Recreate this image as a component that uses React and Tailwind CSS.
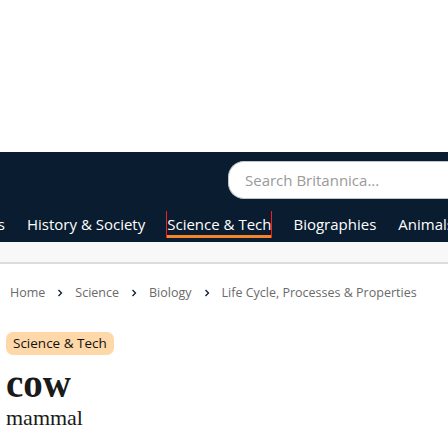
import React from 'react';

const navItems = ['History & Society', 'Science & Tech', 'Biographies', 'Animals & Nature', 'Geography & Travel'];
const crumbs = ['Home', 'Science', 'Biology', 'Life Cycle, Processes & Properties'];
const tabs = [
    { label: 'Table of Contents', w: 'w-[62px]' },
    { label: 'Ask', w: 'w-[58px]' },
    { label: 'Facts', w: 'w-[66px]' },
    { label: 'Related', w: 'w-[87px]' },
    { label: 'Cite', w: 'w-[36px]' },
];

const App = () => {
    return (
        <div className="w-[448px] h-[448px] overflow-hidden bg-white" style={{ fontFamily: '"Open Sans", "Noto Sans", sans-serif' }}>
            <div className="h-[152px]" />

            <header className="bg-[#0a1c30] h-[90px] flex flex-col">
                <div className="flex pt-[9px] pl-[228px]">
                    <div className="flex-1 h-[38px] bg-white rounded-l-[16px] border border-[#bfc4c9] border-r-0 flex items-center pl-[16px]">
                        <span className="text-[15px] text-[#9a9a9a] whitespace-nowrap">Search Britannica...</span>
                    </div>
                </div>
                <nav className="flex items-center mt-[12px] gap-[22px] whitespace-nowrap overflow-hidden">
                    <div className="w-[5px] shrink-0 flex justify-end overflow-hidden">
                        <span className="text-[15px] text-white leading-[27px]">Games &amp; Quizzes</span>
                    </div>
                    {navItems.map((item) => (
                        <div
                            key={item}
                            className={`h-[27px] flex items-center text-[15px] text-white shrink-0 ${item === 'Science & Tech' ? 'outline outline-1 outline-[#ff1a1a] border-b-[3px] border-[#f6842b] pt-[2px]' : ''}`}
                        >
                            {item}
                        </div>
                    ))}
                </nav>
            </header>

            <div className="h-[22px] bg-[#f8f8f8] border-b-2 border-[#dcdcdc]" />

            <div className="flex items-center gap-[12px] pl-[10px] mt-[22px] h-[14px] text-[12.5px] text-[#6a6a6a] whitespace-nowrap">
                {crumbs.map((c, i) => (
                    <React.Fragment key={c}>
                        {i > 0 && (
                            <svg width="6" height="8" viewBox="0 0 6 8" className="shrink-0">
                                <path d="M1.5 1 L4.5 4 L1.5 7" stroke="#0a1c30" strokeWidth="1.3" fill="none" />
                            </svg>
                        )}
                        <span>{c}</span>
                    </React.Fragment>
                ))}
            </div>

            <div className="px-[6px] pt-[30px]">
                <span className="inline-flex items-center h-[23px] px-[7px] rounded-[7px] bg-[#fed8a8] text-[13.5px] text-[#111]">
                    Science &amp; Tech
                </span>
                <h1 className="mt-[10px] text-[39px] leading-[38px] font-bold text-[#1a1a1a]" style={{ fontFamily: '"Liberation Serif", serif' }}>
                    cow
                </h1>
                <p className="text-[22px] leading-[30px] text-[#1a1a1a]" style={{ fontFamily: '"Liberation Serif", serif' }}>
                    mammal
                </p>
                <div className="flex gap-[9px] mt-[18px] pl-[2px]">
                    {tabs.map((t) => (
                        <div key={t.label} className={`${t.w} h-[30px] rounded-[6px] border border-[#d4d4d4] text-[12px] flex items-center justify-center overflow-hidden text-white`}>
                            {t.label}
                        </div>
                    ))}
                </div>
            </div>
        </div>
    );
};

export default App;
